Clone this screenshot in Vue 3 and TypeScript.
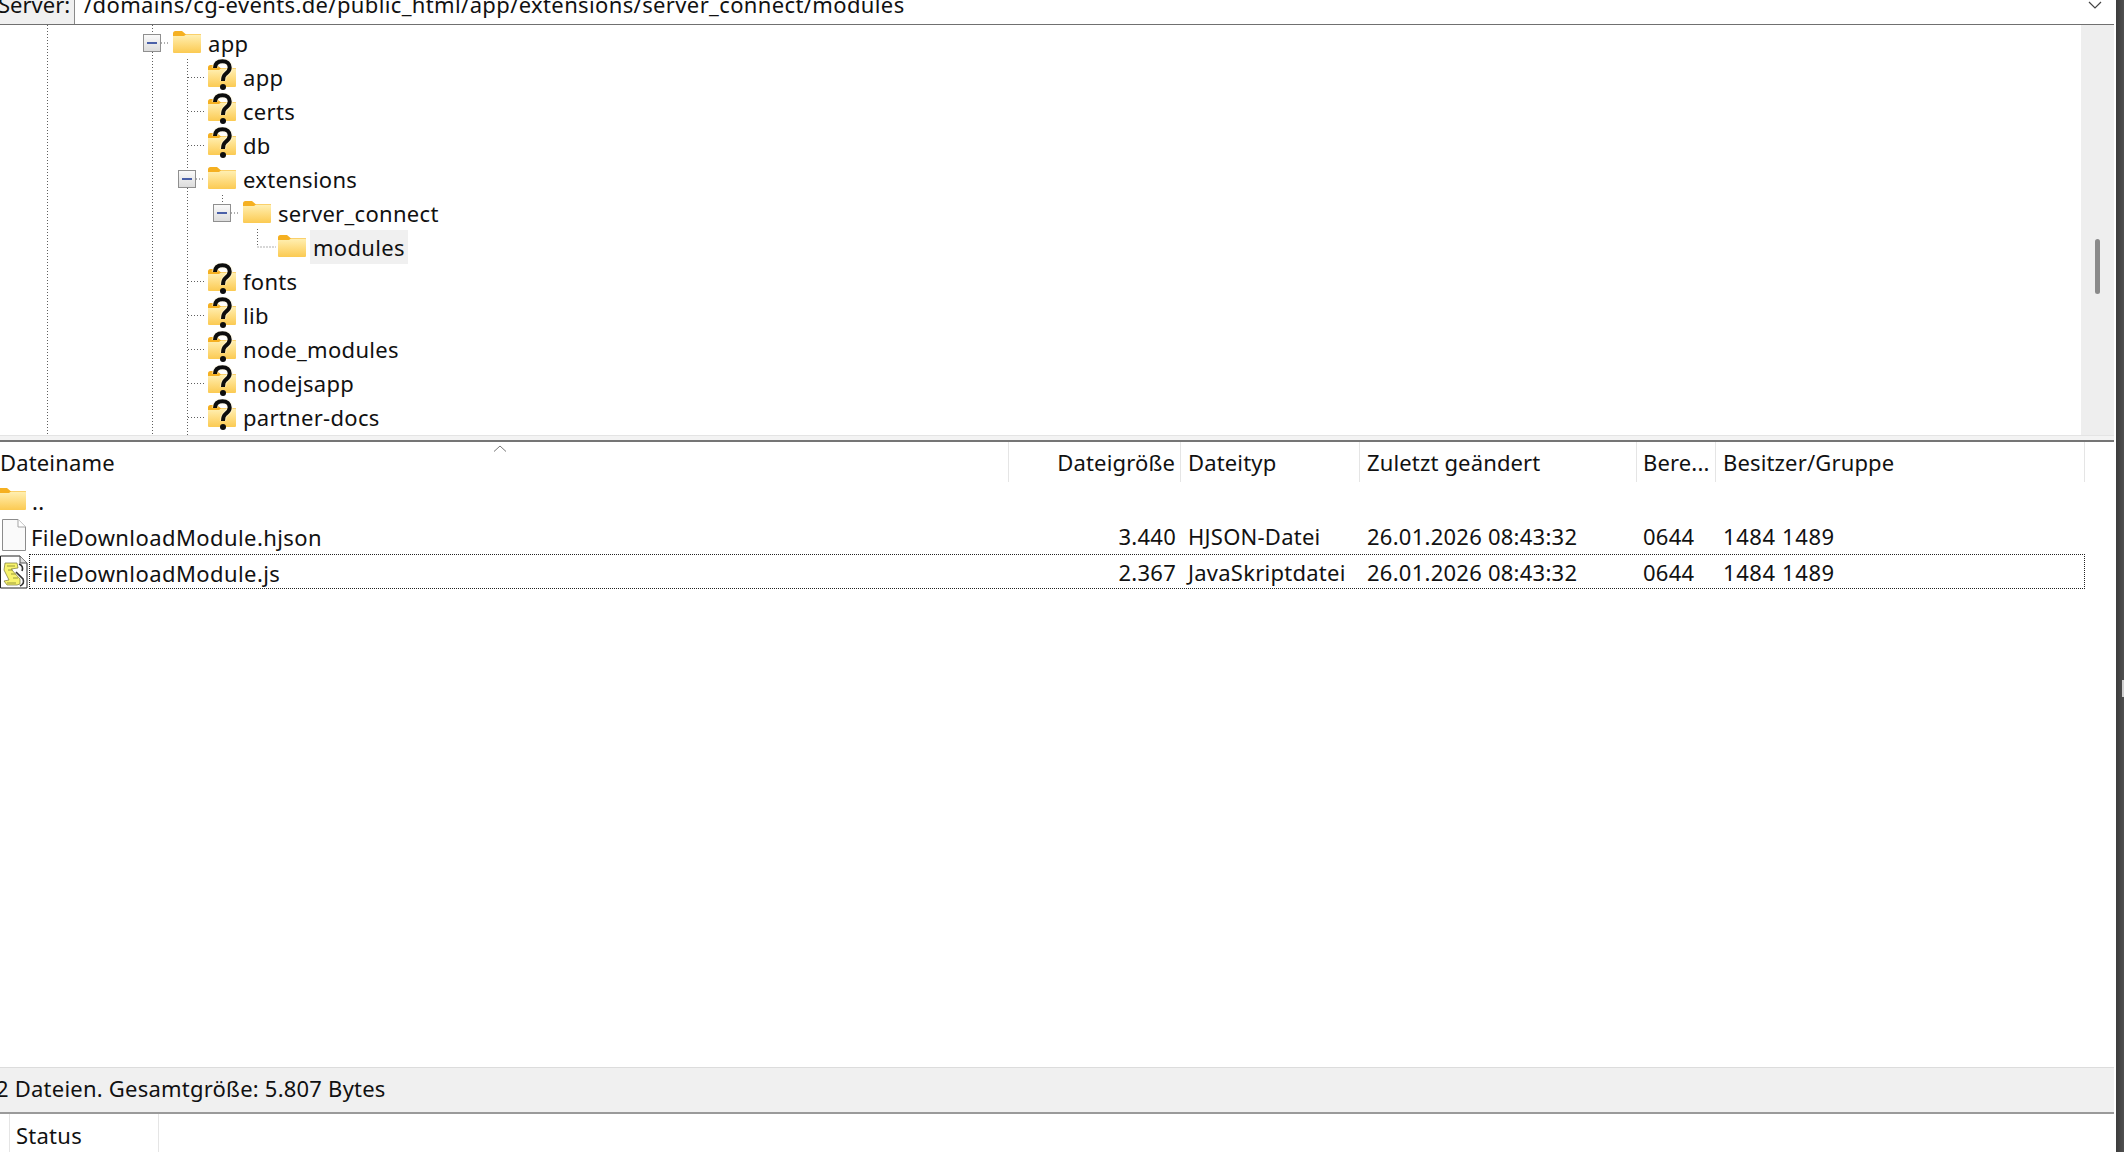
<script setup lang="ts">
interface TreeRow {
  name: string
  depth: number
  unknown?: boolean
  open?: boolean
  current?: boolean
}
interface FileRow {
  name: string
  icon: 'folder' | 'doc' | 'script'
  size: string
  type: string
  modified: string
  perms: string
  owner: string
  focused?: boolean
}

const treeRows: TreeRow[] = [
  { name: 'app', depth: 0, open: true },
  { name: 'app', depth: 1, unknown: true },
  { name: 'certs', depth: 1, unknown: true },
  { name: 'db', depth: 1, unknown: true },
  { name: 'extensions', depth: 1, open: true },
  { name: 'server_connect', depth: 2, open: true },
  { name: 'modules', depth: 3, current: true },
  { name: 'fonts', depth: 1, unknown: true },
  { name: 'lib', depth: 1, unknown: true },
  { name: 'node_modules', depth: 1, unknown: true },
  { name: 'nodejsapp', depth: 1, unknown: true },
  { name: 'partner-docs', depth: 1, unknown: true }
]

const fileRows: FileRow[] = [
  { name: '..', icon: 'folder', size: '', type: '', modified: '', perms: '', owner: '' },
  { name: 'FileDownloadModule.hjson', icon: 'doc', size: '3.440', type: 'HJSON-Datei', modified: '26.01.2026 08:43:32', perms: '0644', owner: '1484 1489' },
  { name: 'FileDownloadModule.js', icon: 'script', size: '2.367', type: 'JavaSkriptdatei', modified: '26.01.2026 08:43:32', perms: '0644', owner: '1484 1489', focused: true }
]

const guides: string[] = [
  'M47.5 0V410',
  'M152.5 0V9M152.5 27V410',
  'M187.5 34V145M187.5 163V410',
  'M222.5 170V179',
  'M257.5 204V222H276',
  'M161 18H170',
  'M196 154H205',
  'M231 188H240',
  ...[1, 2, 3, 7, 8, 9, 10, 11].map((i) => `M188 ${18 + 34 * i + 0.5}H206`)
]

const qPath = 'M5 9C5 4 8.500 2.200 12.500 2.200C17 2.200 19.700 5 19.700 8.500C19.700 12 17.500 13.500 15.500 15C13.500 16.500 13 18 13 22'
</script>

<template>
  <div class="screen">
    <svg class="defs" width="0" height="0" aria-hidden="true">
      <defs>
        <linearGradient id="folderBody" x1="0" y1="0" x2="0" y2="1">
          <stop offset="0" stop-color="#fff0b4" />
          <stop offset="0.5" stop-color="#fedd82" />
          <stop offset="1" stop-color="#fbca52" />
        </linearGradient>
        <symbol id="folder" viewBox="0 0 28 22">
          <path d="M0 2.500Q0 0 2.500 0H9L12.500 3H27Q28 3 28 4V6H0Z" fill="#f5b021" />
          <path d="M0 5H11L13 3.500H27Q28 3.500 28 4.500V21Q28 22 27 22H1Q0 22 0 21Z" fill="url(#folderBody)" />
        </symbol>
      </defs>
    </svg>

    <div class="window">
      <div class="server-bar">
        <span class="server-label">Server:</span>
        <div class="server-input">
          <span class="server-path">/domains/cg-events.de/public_html/app/extensions/server_connect/modules</span>
          <svg class="chevron" width="14" height="8" viewBox="0 0 14 8"><path d="M1 1L7 7L13 1" fill="none" stroke="#444" stroke-width="1.200" /></svg>
        </div>
      </div>

      <div class="tree-pane">
        <div class="tree">
          <svg class="guides" width="400" height="410" viewBox="0 0 400 410">
            <path v-for="(d, i) in guides" :key="i" :d="d" fill="none" stroke="#5f5f5f" stroke-width="1" stroke-dasharray="1 2" />
          </svg>
          <div v-for="(row, i) in treeRows" :key="i" class="tree-row" :class="'depth-' + row.depth">
            <span class="expander-slot">
              <span v-if="row.open" class="expander"><i></i></span>
            </span>
            <span class="tree-icon">
              <svg width="28" height="22"><use href="#folder" /></svg>
              <svg v-if="row.unknown" class="question" width="24" height="32" viewBox="0 0 24 32">
                <path :d="qPath" fill="none" stroke="#fff8dc" stroke-width="6.500" opacity="0.5" />
                <path :d="qPath" fill="none" stroke="#0d0d0d" stroke-width="4" />
                <circle cx="13" cy="28" r="3" fill="#0d0d0d" />
              </svg>
            </span>
            <span class="tree-label" :class="{ current: row.current }">{{ row.name }}</span>
          </div>
        </div>
        <div class="scrollbar"><div class="thumb"></div></div>
      </div>

      <div class="sash"></div>

      <div class="list">
        <div class="cols list-head">
          <span class="cell name-head">Dateiname
            <svg class="sort" width="14" height="7" viewBox="0 0 14 7"><path d="M1 6.500L7 1L13 6.500" fill="none" stroke="#777" stroke-width="1" /></svg>
          </span>
          <span class="cell num">Dateigröße</span>
          <span class="cell">Dateityp</span>
          <span class="cell">Zuletzt geändert</span>
          <span class="cell perms">Bere...</span>
          <span class="cell">Besitzer/Gruppe</span>
        </div>
        <div v-for="file in fileRows" :key="file.name" class="cols file-row" :class="{ focused: file.focused }">
          <span class="cell file-name">
            <svg v-if="file.icon === 'folder'" class="icon-up" width="28" height="22"><use href="#folder" /></svg>
            <svg v-else-if="file.icon === 'doc'" class="icon-doc" width="24" height="32" viewBox="0 0 24 32">
              <path d="M0.500 0.500H16L23.500 8V31.500H0.500Z" fill="#fafafa" stroke="#8c8c8c" />
              <path d="M16 0.500V8H23.500" fill="#fff" stroke="#a5a5a5" />
            </svg>
            <svg v-else class="icon-script" width="28" height="34" viewBox="0 0 28 34">
              <path d="M0.500 1H20L27 8V33H0.500Z" fill="#fff" stroke="#222" />
              <path d="M20 1V8H27" fill="#e2e2e2" stroke="#555" />
              <path d="M5 8H17L18 13L11 14L20 24L20 29L17 30H7L4 26L9 25L4 15Z" fill="#f8f36c" stroke="#77773a" stroke-width="0.700" />
              <path d="M7 11H15M8 15H13M11 19H16M13 23H18M7 28H16" stroke="#9a9a3a" stroke-width="1" />
              <path d="M19 9Q24 11 22 16M16 17L23 24Q25 29 20 31" fill="none" stroke="#333" stroke-width="1.600" />
            </svg>
            <span class="file-text">{{ file.name }}</span>
          </span>
          <span class="cell num">{{ file.size }}</span>
          <span class="cell">{{ file.type }}</span>
          <span class="cell">{{ file.modified }}</span>
          <span class="cell perms">{{ file.perms }}</span>
          <span class="cell owner">{{ file.owner }}</span>
        </div>
      </div>

      <div class="summary"><span>2 Dateien. Gesamtgröße: 5.807 Bytes</span></div>

      <div class="queue-tabs">
        <span class="tab">Status</span>
      </div>
    </div>

    <div class="edge"><i></i></div>
  </div>
</template>

<style>
html, body { margin: 0; background: #fff; }
</style>

<style scoped>
.screen {
  width: 2124px;
  height: 1152px;
  display: flex;
  overflow: hidden;
  position: relative;
  background: #fff;
  color: #111;
  font-family: "Noto Sans", "Open Sans", sans-serif;
  font-size: 22px;
  line-height: 30px;
  letter-spacing: 0.25px;
}
.defs { position: absolute; }
.window {
  width: 2114px;
  display: flex;
  flex-direction: column;
  flex: none;
}
.server-bar {
  height: 25px;
  flex: none;
  display: flex;
  border-bottom: 1px solid #707070;
  box-sizing: border-box;
  overflow: hidden;
}
.server-label {
  width: 75px;
  flex: none;
  box-sizing: border-box;
  background: #f0f0f0;
  border-right: 1px solid #8a8a8a;
  margin-top: -11px;
  height: 36px;
  text-indent: -2px;
  white-space: nowrap;
  line-height: 30px;
  letter-spacing: 0;
}
.server-input {
  flex: 1;
  display: flex;
  justify-content: space-between;
  padding: 0 12px 0 9px;
}
.server-path {
  margin-top: -11px;
  white-space: nowrap;
  letter-spacing: 0.37px;
}
.chevron { margin-top: 1px; }

.tree-pane {
  height: 410px;
  flex: none;
  display: flex;
}
.tree {
  flex: 1;
  position: relative;
  padding-top: 1px;
  overflow: hidden;
}
.guides {
  position: absolute;
  left: 0;
  top: 0;
}
.tree-row {
  height: 34px;
  display: flex;
  align-items: center;
  position: relative;
}
.depth-0 { padding-left: 143px; }
.depth-1 { padding-left: 178px; }
.depth-2 { padding-left: 213px; }
.depth-3 { padding-left: 248px; }
.expander-slot {
  width: 30px;
  flex: none;
}
.expander {
  display: flex;
  width: 18px;
  height: 18px;
  box-sizing: border-box;
  border: 1px solid #8f8f8f;
  background: linear-gradient(#fafafa, #dcdcdc);
  align-items: center;
  justify-content: center;
}
.expander i {
  width: 10px;
  height: 2px;
  background: #4a60a8;
}
.tree-icon {
  width: 28px;
  height: 22px;
  flex: none;
  position: relative;
  display: block;
  margin-top: -2px;
}
.tree-icon > svg { display: block; }
.tree-icon .question {
  position: absolute;
  left: 2px;
  top: -6px;
}
.tree-label {
  margin-left: 4px;
  padding: 0 3px;
  height: 34px;
  line-height: 34px;
  white-space: nowrap;
  letter-spacing: 0.3px;
}
.tree-label.current {
  background: #f0f0f0;
}
.scrollbar {
  width: 33px;
  flex: none;
  background: #eeeeee;
  position: relative;
  display: flex;
  justify-content: center;
}
.thumb {
  width: 5px;
  height: 55px;
  margin-top: 214px;
  margin-left: -1px;
  border-radius: 3px;
  background: #8a8a8a;
}
.sash {
  height: 7px;
  flex: none;
  box-sizing: border-box;
  background: #f3f3f3;
  border-top: 1px solid #e4e4e4;
  border-bottom: 2px solid #757575;
}

.list {
  flex: 1;
  min-height: 0;
}
.cols {
  display: grid;
  grid-template-columns: 1009px 172px 179px 277px 79px 369px;
}
.list-head {
  height: 41px;
  letter-spacing: 0.15px;
}
.list-head .cell {
  border-right: 1px solid #e5e5e5;
  height: 40px;
  line-height: 40px;
  position: relative;
  box-sizing: border-box;
}
.cell {
  padding-left: 7px;
  padding-right: 5px;
  white-space: nowrap;
  overflow: hidden;
  display: block;
}
.num { text-align: right; }
.perms { padding-left: 6px; }
.name-head { padding-left: 0; }
.owner { letter-spacing: 0.6px; }
.sort {
  position: absolute;
  left: 493px;
  top: 3px;
}
.file-row {
  height: 36px;
  line-height: 35px;
  position: relative;
}
.file-row .file-name {
  padding-left: 0;
  display: flex;
  align-items: center;
  overflow: visible;
}
.file-name svg { flex: none; }
.file-text { letter-spacing: 0.42px; }
.icon-up { margin-left: -2px; margin-right: 6px; margin-top: -5px; }
.icon-doc { margin-left: 2px; margin-right: 5px; margin-top: -4px; }
.icon-script { margin-right: 3px; margin-top: -2px; }
.focused::after {
  content: "";
  position: absolute;
  left: 29px;
  top: -1px;
  width: 2056px;
  height: 35px;
  box-sizing: border-box;
  border: 1px dotted #222;
  pointer-events: none;
}
.summary {
  height: 47px;
  flex: none;
  box-sizing: border-box;
  background: #f0f0f0;
  border-top: 1px solid #dcdcdc;
  border-bottom: 2px solid #9a9a9a;
  line-height: 41px;
  text-indent: -4px;
  letter-spacing: 0.22px;
  white-space: nowrap;
  overflow: hidden;
}
.queue-tabs {
  height: 38px;
  flex: none;
  padding-left: 9px;
  display: flex;
}
.tab {
  width: 150px;
  box-sizing: border-box;
  border-left: 1px solid #e5e5e5;
  border-right: 1px solid #e5e5e5;
  padding-left: 6px;
  line-height: 42px;
  height: 38px;
}
.edge {
  position: absolute;
  left: 2116px;
  top: 0;
  width: 8px;
  height: 1152px;
  background: linear-gradient(90deg, #3c3c3c, #505050);
}
.edge i {
  position: absolute;
  left: 6px;
  top: 680px;
  width: 2px;
  height: 17px;
  background: #cfcfcf;
}
</style>
